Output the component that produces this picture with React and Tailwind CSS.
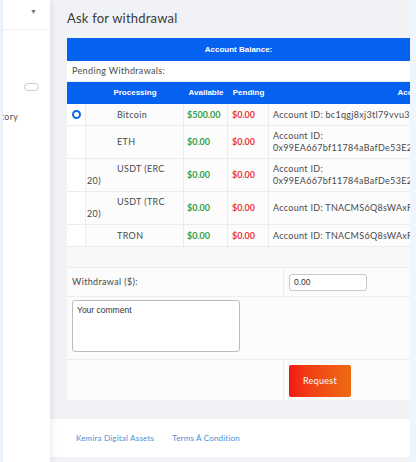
import React from "react";

const rows = [
  {
    id: 1,
    name: ["Bitcoin"],
    avail: "$500.00",
    acct: ["Account ID: bc1qgj8xj3tl79vvu3yq2h7ms4k0nz"],
    checked: true,
  },
  {
    id: 2,
    name: ["ETH"],
    avail: "$0.00",
    acct: ["Account ID:", "0x99EA667bf11784aBafDe53E2e1c09f4a5B2"],
  },
  {
    id: 3,
    name: ["USDT (ERC", "20)"],
    avail: "$0.00",
    acct: ["Account ID:", "0x99EA667bf11784aBafDe53E2e1c09f4a5B2"],
  },
  {
    id: 4,
    name: ["USDT (TRC", "20)"],
    avail: "$0.00",
    acct: ["Account ID: TNACMS6Q8sWAxFcR7hY2pLd9kQ"],
  },
  {
    id: 5,
    name: ["TRON"],
    avail: "$0.00",
    acct: ["Account ID: TNACMS6Q8sWAxFcR7hY2pLd9kQ"],
  },
];

const cell = "min-h-[22px] border-r border-b border-[#ececec] flex items-center bg-[#fcfcfc]";
const head = "font-['Liberation_Sans',Arial,sans-serif] font-bold text-white text-[8px]";

const App = () => {
  return (
    <div className="w-[416px] h-[462px] flex bg-[#eef5fd] overflow-hidden font-['Lato',sans-serif] text-[#4a4a4a]">
      <div className="w-[3px] shrink-0" />
      {/* sidebar */}
      <div className="w-[47px] shrink-0 bg-white overflow-hidden relative z-10 shadow-[2px_0_7px_rgba(0,0,0,0.07)]">
        <div className="h-[30px] border-b border-[#f0f0f0] flex items-start justify-end pr-[13px] pt-[6px]">
          <span className="text-[7px] text-[#777]">▼</span>
        </div>
        <div className="h-[53px]" />
        <div className="flex justify-end pr-[11px]">
          <div className="w-[15px] h-[8px] rounded-full border border-[#ccc]" />
        </div>
        <div className="h-[19px]" />
        <div className="ml-[-16px] text-[9px] tracking-[0.3px] text-[#555] whitespace-nowrap">
          History
        </div>
      </div>

      {/* main */}
      <div className="w-[360px] shrink-0 bg-[#f0f2f5] flex flex-col overflow-hidden">
        <div className="h-[38px] pl-[17px] flex items-center text-[13px] text-[#3b3b3b] tracking-[0.2px]">
          Ask for withdrawal
        </div>
        <div className="ml-[17px] w-[343px] overflow-hidden">
          <div className={`h-[23px] bg-[#0562f0] flex items-center justify-center ${head}`}>
            Account Balance:
          </div>
          <div className="h-[21px] bg-white flex items-center pl-[5px] text-[9px] tracking-[0.35px] border-b border-[#ececec]">
            Pending Withdrawals:
          </div>
          <div className="w-[491px] grid grid-cols-[19px_98px_44px_41px_289px]">
            <div className="h-[22px] bg-[#0562f0]" />
            <div className={`h-[22px] bg-[#0562f0] flex items-center justify-center ${head}`}>Processing</div>
            <div className={`h-[22px] bg-[#0562f0] flex items-center justify-center ${head}`}>Available</div>
            <div className={`h-[22px] bg-[#0562f0] flex items-center justify-center ${head}`}>Pending</div>
            <div className={`h-[22px] bg-[#0562f0] flex items-center justify-center ${head}`}>Account</div>
            {rows.map((r) => (
              <React.Fragment key={r.id}>
                <div className={`${cell} justify-center bg-white`}>
                  {r.checked && (
                    <span className="w-[9px] h-[9px] rounded-full border-[2.5px] border-[#0a66f0] bg-white" />
                  )}
                </div>
                <div className={`${cell} pl-[1px] py-[4px] text-[9px] leading-[12px] tracking-[0.35px]`}>
                  <div>
                    <span className="inline-block w-[30px]" />
                    {r.name[0]}
                    {r.name[1] && (
                      <>
                        <br />
                        {r.name[1]}
                      </>
                    )}
                  </div>
                </div>
                <div className={`${cell} pl-[3px] text-[9px] font-bold text-[#36a046]`}>{r.avail}</div>
                <div className={`${cell} pl-[4px] text-[9px] font-bold text-[#e83a3d]`}>$0.00</div>
                <div className={`${cell} pl-[4px] py-[4px] text-[9px] leading-[12px] tracking-[0.3px] whitespace-nowrap overflow-hidden`}>
                  <div>
                    {r.acct.map((t, i) => (
                      <div key={i}>{t}</div>
                    ))}
                  </div>
                </div>
              </React.Fragment>
            ))}
          </div>
          <div className="h-[21px] bg-[#f8f8f8] border-b border-[#ececec]" />
          <div className="h-[29px] flex bg-[#fbfbfb] border-b border-[#ececec]">
            <div className="w-[217px] border-r border-[#ececec] flex items-center pl-[5px] text-[9px] tracking-[0.35px]">
              Withdrawal ($):
            </div>
            <div className="flex items-center pl-[5px]">
              <div className="w-[78px] h-[17px] rounded-[3px] border border-[#c8c8c8] bg-white flex items-center pl-[4px] text-[8.5px] text-[#333] font-['Liberation_Sans',Arial,sans-serif]">
                0.00
              </div>
            </div>
          </div>
          <div className="h-[63px] bg-[#fbfbfb] border-b border-[#ececec] pl-[5px] pt-[3px]">
            <div className="w-[168px] h-[52px] rounded-[3px] border border-[#bdbdbd] bg-white px-[4px] pt-[3px] text-[8.5px] text-[#333] font-['Liberation_Sans',Arial,sans-serif]">
              Your comment
            </div>
          </div>
          <div className="h-[40px] flex bg-[#fbfbfb]">
            <div className="w-[217px] border-r border-[#ececec]" />
            <div className="pl-[5px] pt-[5px]">
              <button className="w-[62px] h-[32px] rounded-[2px] bg-gradient-to-r from-[#f31414] to-[#ec6a12] text-white text-[9px] tracking-[0.3px]">
                Request
              </button>
            </div>
          </div>
        </div>
        <div className="h-[19px] shrink-0" />
        <div className="h-[38px] shrink-0 bg-white flex items-center pl-[26px] gap-[18px] text-[8px] text-[#4a8fd8] tracking-[0.2px]">
          <span>Kemira Digital Assets</span>
          <span>Terms Á Condition</span>
        </div>
      </div>
      <div className="flex-1" />
    </div>
  );
};

export default App;
